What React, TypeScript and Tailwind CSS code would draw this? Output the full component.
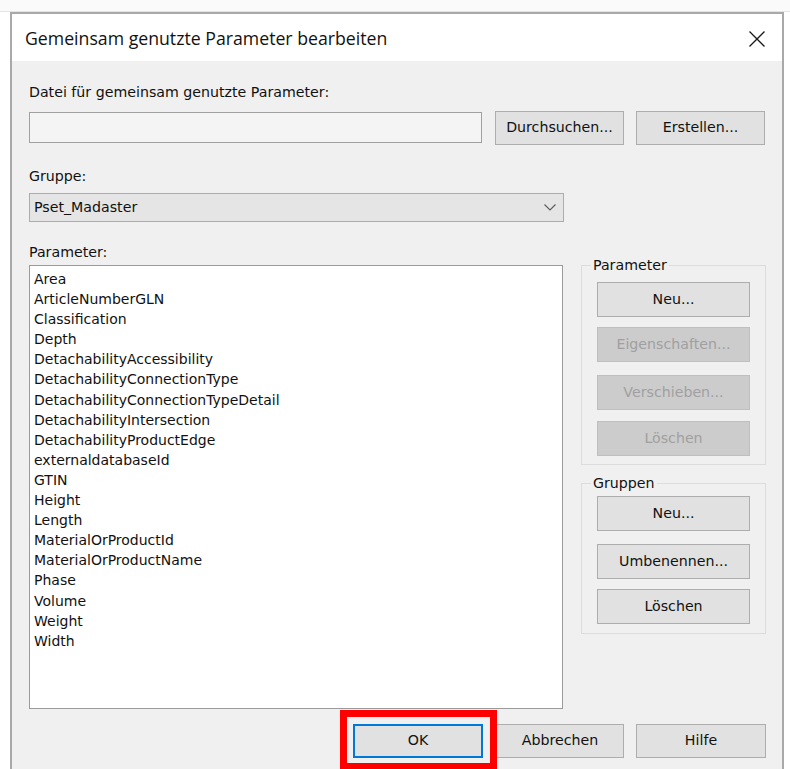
import React from "react";

const params = [
  "Area",
  "ArticleNumberGLN",
  "Classification",
  "Depth",
  "DetachabilityAccessibility",
  "DetachabilityConnectionType",
  "DetachabilityConnectionTypeDetail",
  "DetachabilityIntersection",
  "DetachabilityProductEdge",
  "externaldatabaseId",
  "GTIN",
  "Height",
  "Length",
  "MaterialOrProductId",
  "MaterialOrProductName",
  "Phase",
  "Volume",
  "Weight",
  "Width",
];

const body = "font-['DejaVu_Sans',sans-serif]";

function Btn({
  label,
  className = "",
  disabled = false,
}: {
  label: string;
  className?: string;
  disabled?: boolean;
}) {
  return (
    <div
      className={`flex items-center justify-center border text-[14.2px] ${
        disabled
          ? "bg-[#cccccc] border-[#bfbfbf] text-[#a0a0a0]"
          : "bg-[#e1e1e1] border-[#adadad] text-[#111111]"
      } ${body} ${className}`}
    >
      {label}
    </div>
  );
}

function GroupBox({
  title,
  children,
  className = "",
}: {
  title: string;
  children: React.ReactNode;
  className?: string;
}) {
  return (
    <div className={`relative border border-[#dcdcdc] px-[15px] ${className}`}>
      <span
        className={`absolute left-[9px] top-[-9px] bg-[#f0f0f0] px-[2px] leading-[16px] text-[#111111] ${body} text-[14.2px]`}
      >
        {title}
      </span>
      {children}
    </div>
  );
}

export default function App() {
  return (
    <div className="h-[769px] w-[790px] overflow-hidden bg-white">
      <div className="h-[12px] border-b border-[#e4e4e4] bg-[#fafafa]" />
      <div className="ml-[10px] w-[774px] border-x-2 border-t-2 border-[#a9a9a9] bg-[#f0f0f0] h-[780px]">
        {/* title bar */}
        <div className="flex h-[47px] items-center justify-between bg-white pl-[13px] pr-[16px]">
          <span className="font-['Open_Sans',sans-serif] text-[17.7px] text-[#111111] mt-[2px]">
            Gemeinsam genutzte Parameter bearbeiten
          </span>
          <svg width="18" height="18" viewBox="0 0 18 18" className="mt-[2px]">
            <path d="M1.5 1.5 L16.5 16.5 M16.5 1.5 L1.5 16.5" stroke="#1a1a1a" strokeWidth="1.3" />
          </svg>
        </div>

        <div className="pl-[17px] pr-[16px]">
          <div className={`mt-[21px] leading-[20px] text-[#111111] ${body} text-[14.2px]`}>
            Datei für gemeinsam genutzte Parameter:
          </div>
          <div className="mt-[9px] flex h-[34px] items-start">
            <div className="mt-[1px] h-[31px] w-[453px] border border-[#a0a0a0] bg-[#f4f4f4]" />
            <Btn label="Durchsuchen..." className="ml-[13px] h-[34px] w-[129px]" />
            <Btn label="Erstellen..." className="ml-[12px] h-[34px] w-[129px]" />
          </div>

          <div className={`mt-[21px] leading-[20px] text-[#111111] ${body} text-[14.2px]`}>Gruppe:</div>
          <div
            className={`mt-[7px] flex h-[29px] w-[535px] items-center justify-between border border-[#acacac] bg-[#e5e5e5] pl-[4px] pr-[7px] text-[#111111] ${body} text-[14.2px]`}
          >
            <span>Pset_Madaster</span>
            <svg width="12" height="7" viewBox="0 0 12 7">
              <path d="M0.5 0.5 L6 6 L11.5 0.5" stroke="#5a5a5a" strokeWidth="1.1" fill="none" />
            </svg>
          </div>

          <div className={`mt-[20px] leading-[20px] text-[#111111] ${body} text-[14.2px]`}>Parameter:</div>

          <div className="mt-[3px] flex">
            <div className="h-[444px] w-[535px] border border-[#9a9a9a] bg-white pl-[4px] pt-[3px]">
              {params.map((p) => (
                <div key={p} className={`h-[20.1px] leading-[20px] text-[#111111] ${body} text-[14px]`}>
                  {p}
                </div>
              ))}
            </div>

            <div className="ml-[18px] w-[185px]">
              <GroupBox title="Parameter" className="h-[200px] pt-[16px]">
                <Btn label="Neu..." className="h-[35px] w-[153px]" />
                <Btn label="Eigenschaften..." disabled className="mt-[10px] h-[35px] w-[153px]" />
                <Btn label="Verschieben..." disabled className="mt-[13px] h-[35px] w-[153px]" />
                <Btn label="Löschen" disabled className="mt-[11px] h-[35px] w-[153px]" />
              </GroupBox>
              <GroupBox title="Gruppen" className="mt-[18px] h-[151px] pt-[12px]">
                <Btn label="Neu..." className="h-[35px] w-[153px]" />
                <Btn label="Umbenennen..." className="mt-[13px] h-[35px] w-[153px]" />
                <Btn label="Löschen" className="mt-[10px] h-[35px] w-[153px]" />
              </GroupBox>
            </div>
          </div>

          <div className="mt-[15px] flex justify-end">
            <div className="relative">
              <Btn label="OK" className="h-[34px] w-[130px] !border-[#0078d7] border-2" />
              <div className="absolute left-[-13px] top-[-14px] h-[60px] w-[157px] border-[7px] border-[#ff0000]" />
            </div>
            <Btn label="Abbrechen" className="ml-[13px] h-[34px] w-[128px]" />
            <Btn label="Hilfe" className="ml-[12px] h-[34px] w-[130px]" />
          </div>
        </div>
      </div>
    </div>
  );
}
